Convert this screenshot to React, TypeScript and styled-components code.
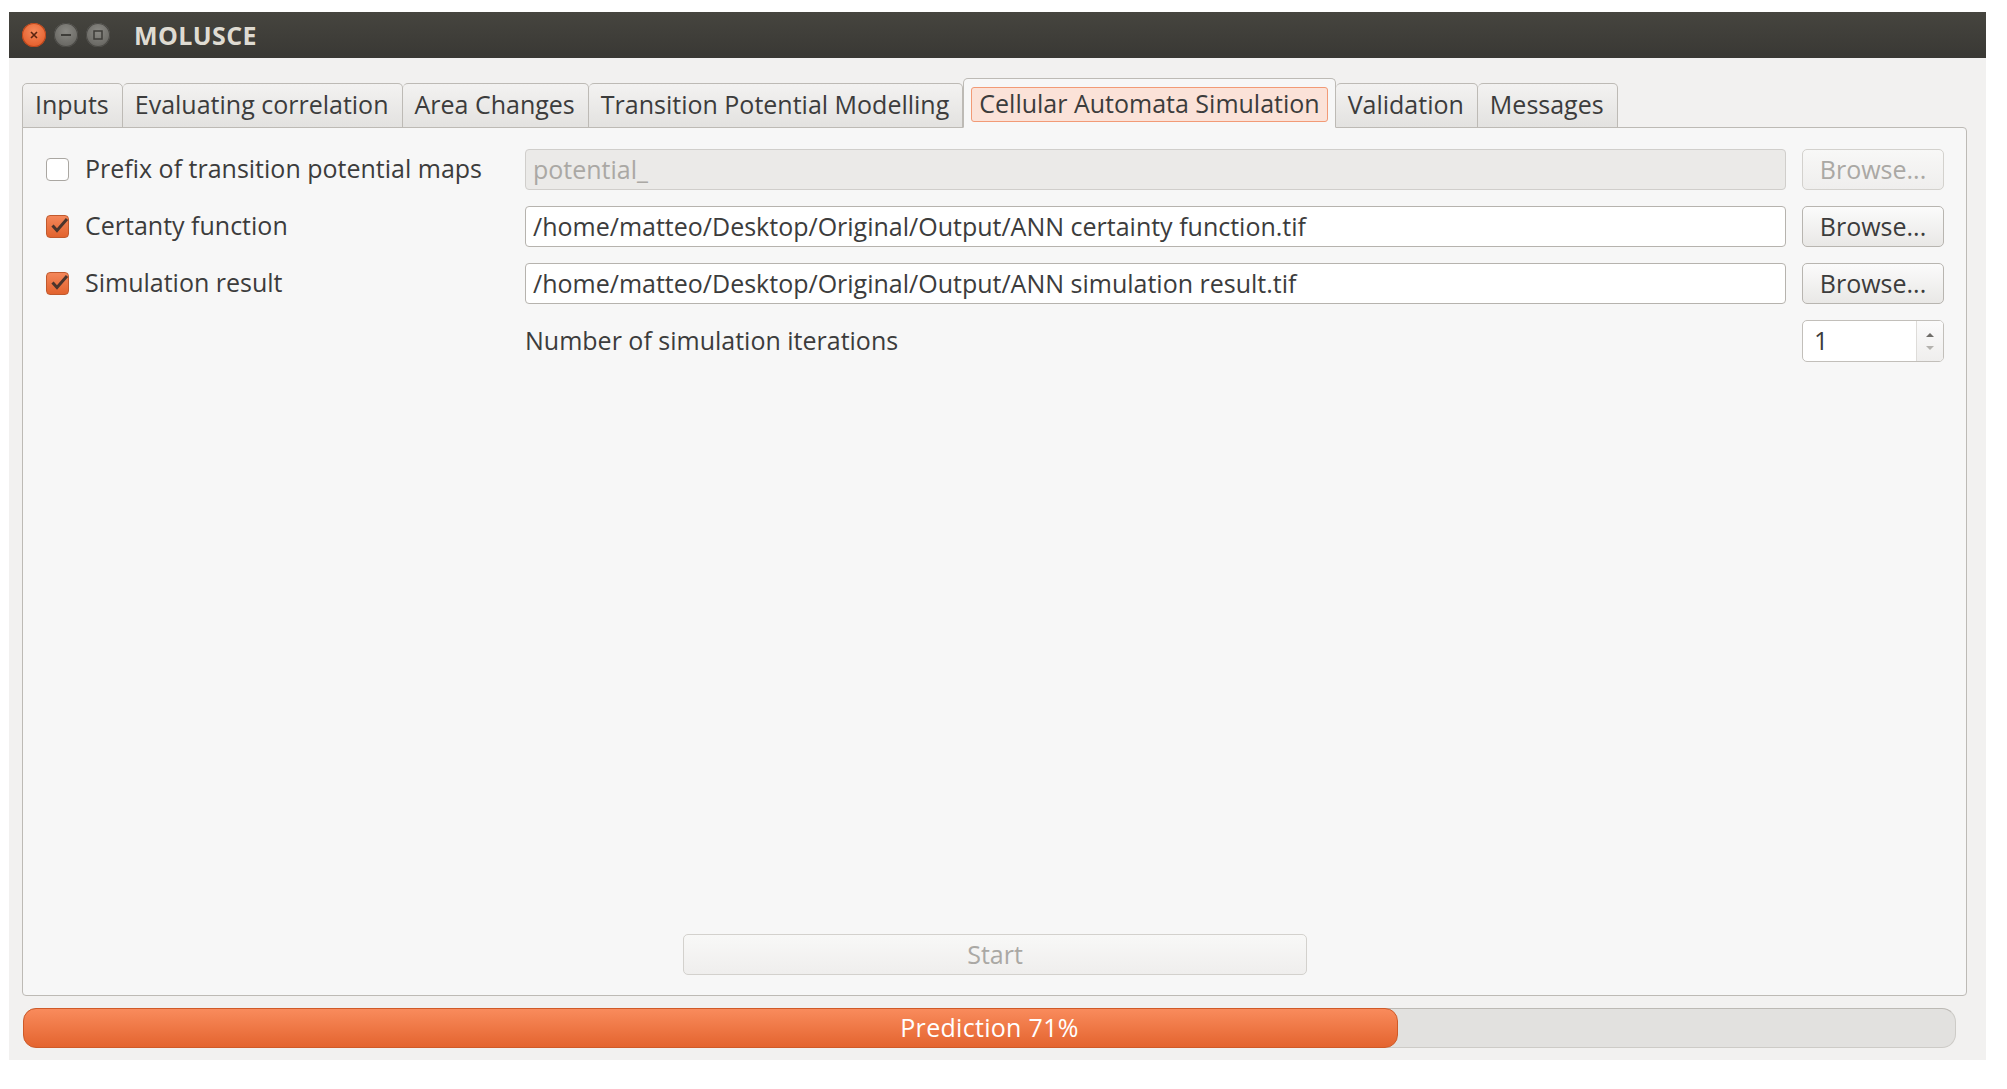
import styled, { createGlobalStyle } from "styled-components"

const GlobalStyle = createGlobalStyle`
  html, body {
    margin: 0;
    padding: 0;
    background: #ffffff;
  }
  body {
    font-family: "Open Sans", "Noto Sans", sans-serif;
    color: #3c3c3c;
  }
`

const Window = styled.div`
  margin: 12px 0 0 9px;
  width: 1977px;
  height: 1048px;
  display: flex;
  flex-direction: column;
  background: #f2f1f0;
`

const TitleBar = styled.div`
  height: 46px;
  display: flex;
  align-items: center;
  padding-left: 13px;
  background: linear-gradient(#46453f, #393834);
`

const WinButtons = styled.div`
  display: flex;
  gap: 8px;
  margin-right: 24px;
`

const WinButton = styled.div<{ $close?: boolean }>`
  width: 24px;
  height: 24px;
  border-radius: 50%;
  display: flex;
  align-items: center;
  justify-content: center;
  background: ${p => p.$close
    ? "radial-gradient(circle at 50% 35%, #f58a5c, #e0531f)"
    : "radial-gradient(circle at 50% 35%, #8a8984, #5e5d58)"};
  box-shadow: inset 0 0 0 1px ${p => p.$close ? "#b9461c" : "#4a4945"};
`

const Title = styled.div`
  font-size: 25px;
  font-weight: 700;
  color: #dfdbd2;
  letter-spacing: 0.4px;
`

const Body = styled.div`
  flex: 1;
  display: flex;
  flex-direction: column;
  padding: 20px 19px 12px 13px;
`

const TabBar = styled.div`
  height: 50px;
  display: flex;
  align-items: flex-end;
  position: relative;
  z-index: 1;
  margin-bottom: -1px;
`

const Tab = styled.div<{ $active?: boolean }>`
  height: ${p => p.$active ? "50px" : "45px"};
  box-sizing: border-box;
  display: flex;
  align-items: center;
  padding: ${p => p.$active ? "8px 7px 5px" : "0 13px 3px 12px"};
  font-size: 25px;
  color: #3c3c3c;
  white-space: nowrap;
  border: 1px solid #bdbab5;
  border-bottom: ${p => p.$active ? "1px solid #f7f7f7" : "1px solid #bdbab5"};
  border-left-width: ${p => p.$active ? "1px" : "0"};
  border-radius: 5px 5px 0 0;
  background: ${p => p.$active ? "#f7f7f7" : "linear-gradient(#f3f2f1, #e3e2e0)"};
  &:first-child {
    border-left-width: 1px;
  }
`

const TabFocus = styled.div`
  height: 100%;
  box-sizing: border-box;
  display: flex;
  align-items: center;
  padding: 0 7px 3px;
  border: 1px solid #f29a76;
  border-radius: 3px;
  background: #fbe2d8;
`

const Panel = styled.div`
  flex: 1;
  display: flex;
  flex-direction: column;
  box-sizing: border-box;
  padding: 21px 22px 20px 23px;
  background: #f7f7f7;
  border: 1px solid #bdbab5;
  border-radius: 0 4px 4px 4px;
`

const Form = styled.div`
  display: grid;
  grid-template-columns: 463px 1fr 142px;
  grid-auto-rows: 41px;
  column-gap: 16px;
  row-gap: 16px;
  align-items: stretch;
`

const CheckRow = styled.label`
  display: flex;
  align-items: center;
  gap: 16px;
  font-size: 25px;
  white-space: nowrap;
  padding-bottom: 3px;
`

const Box = styled.div<{ $checked?: boolean }>`
  width: 23px;
  height: 23px;
  box-sizing: border-box;
  border-radius: 4px;
  border: 1px solid ${p => p.$checked ? "#c15a2e" : "#aaa7a2"};
  background: ${p => p.$checked ? "linear-gradient(#f4875a, #e2632e)" : "#ffffff"};
  display: flex;
  align-items: center;
  justify-content: center;
  flex-shrink: 0;
  margin-top: 3px;
`

const TextInput = styled.div<{ $disabled?: boolean }>`
  display: flex;
  align-items: center;
  box-sizing: border-box;
  padding: 0 0 2px 7px;
  font-size: 25px;
  white-space: nowrap;
  border-radius: 4px;
  border: 1px solid ${p => p.$disabled ? "#d0cecb" : "#b6b3ae"};
  background: ${p => p.$disabled ? "#ebeae8" : "#ffffff"};
  color: ${p => p.$disabled ? "#aaa8a4" : "#3c3c3c"};
`

const Button = styled.div<{ $disabled?: boolean }>`
  display: flex;
  align-items: center;
  justify-content: center;
  box-sizing: border-box;
  font-size: 25px;
  padding-bottom: 2px;
  border-radius: 5px;
  border: 1px solid ${p => p.$disabled ? "#d3d1cd" : "#b8b5b0"};
  background: ${p => p.$disabled ? "linear-gradient(#f8f8f7, #efeeed)" : "linear-gradient(#fbfbfb, #e9e8e6)"};
  color: ${p => p.$disabled ? "#aaa8a4" : "#3c3c3c"};
`

const FieldLabel = styled.div`
  grid-column: 2;
  display: flex;
  align-items: center;
  font-size: 25px;
  padding-bottom: 2px;
`

const SpinBox = styled.div`
  grid-column: 3;
  height: 42px;
  display: flex;
  box-sizing: border-box;
  border: 1px solid #c2bfba;
  border-radius: 5px;
  background: #ffffff;
  overflow: hidden;
`

const SpinValue = styled.div`
  flex: 1;
  display: flex;
  align-items: center;
  padding: 0 0 2px 11px;
  font-size: 25px;
`

const SpinArrows = styled.div`
  width: 26px;
  display: flex;
  flex-direction: column;
  align-items: center;
  justify-content: center;
  gap: 9px;
  border-left: 1px solid #dedcd9;
  background: linear-gradient(#fbfbfb, #efeeed);
`

const Arrow = styled.div<{ $down?: boolean }>`
  width: 0;
  height: 0;
  border-left: 4px solid transparent;
  border-right: 4px solid transparent;
  ${p => p.$down ? "border-top: 4px solid #b4b2ae;" : "border-bottom: 4px solid #6f6d69;"}
`

const StartButton = styled(Button)`
  margin-top: auto;
  align-self: center;
  width: 624px;
  height: 41px;
`

const Progress = styled.div`
  position: relative;
  margin: 12px 11px 0 1px;
  height: 40px;
  box-sizing: border-box;
  border-radius: 14px;
  border: 1px solid #cdcbc7;
  border-top-color: #bcb9b4;
  background: #e2e1df;
`

const ProgressFill = styled.div`
  box-sizing: border-box;
  border-radius: 13px;
  border: 1px solid #cf5a28;
  margin: -1px 0 0 -1px;
  height: 40px;
  background: linear-gradient(#f98b5c, #e4642f);
`

const ProgressText = styled.div`
  position: absolute;
  inset: 0;
  display: flex;
  align-items: center;
  justify-content: center;
  font-size: 25px;
  letter-spacing: 0.3px;
  color: #ffffff;
  padding-bottom: 2px;
`

const tabs = [
  "Inputs",
  "Evaluating correlation",
  "Area Changes",
  "Transition Potential Modelling",
  "Cellular Automata Simulation",
  "Validation",
  "Messages",
]

const outputs = [
  { label: "Prefix of transition potential maps", value: "potential_", on: false },
  { label: "Certanty function", value: "/home/matteo/Desktop/Original/Output/ANN certainty function.tif", on: true },
  { label: "Simulation result", value: "/home/matteo/Desktop/Original/Output/ANN simulation result.tif", on: true },
]

function Check() {
  return (
    <svg width="19" height="17" viewBox="0 0 19 17" style={{ marginTop: -3, marginRight: -3 }}>
      <path d="M2.5 8.5 L7 13.5 L17 2" fill="none" stroke="#4b352c" strokeWidth="3" strokeLinejoin="miter" />
    </svg>
  )
}

export default function App() {
  const progress = 71.2

  return (
    <>
      <GlobalStyle />
      <Window>
        <TitleBar>
          <WinButtons>
            <WinButton $close>
              <svg width="10" height="10" viewBox="0 0 10 10">
                <path d="M2 2 L8 8 M8 2 L2 8" stroke="#5a2410" strokeWidth="1.6" />
              </svg>
            </WinButton>
            <WinButton>
              <svg width="12" height="4" viewBox="0 0 12 4">
                <rect x="1" y="1" width="10" height="2" fill="#3e3d39" />
              </svg>
            </WinButton>
            <WinButton>
              <svg width="12" height="12" viewBox="0 0 12 12">
                <rect x="2" y="2" width="8" height="8" fill="none" stroke="#3e3d39" strokeWidth="1.5" />
              </svg>
            </WinButton>
          </WinButtons>
          <Title>MOLUSCE</Title>
        </TitleBar>
        <Body>
          <TabBar>
            {tabs.map(t => t === "Cellular Automata Simulation" ? (
              <Tab key={t} $active>
                <TabFocus>{t}</TabFocus>
              </Tab>
            ) : (
              <Tab key={t}>{t}</Tab>
            ))}
          </TabBar>
          <Panel>
            <Form>
              {outputs.map(o => (
                <>
                  <CheckRow key={o.label}>
                    <Box $checked={o.on}>{o.on && <Check />}</Box>
                    {o.label}
                  </CheckRow>
                  <TextInput $disabled={!o.on}>{o.value}</TextInput>
                  <Button $disabled={!o.on}>Browse...</Button>
                </>
              ))}
              <FieldLabel>Number of simulation iterations</FieldLabel>
              <SpinBox>
                <SpinValue>1</SpinValue>
                <SpinArrows>
                  <Arrow />
                  <Arrow $down />
                </SpinArrows>
              </SpinBox>
            </Form>
            <StartButton $disabled>Start</StartButton>
          </Panel>
          <Progress>
            <ProgressFill style={{ width: `${progress}%` }} />
            <ProgressText>Prediction 71%</ProgressText>
          </Progress>
        </Body>
      </Window>
    </>
  )
}
